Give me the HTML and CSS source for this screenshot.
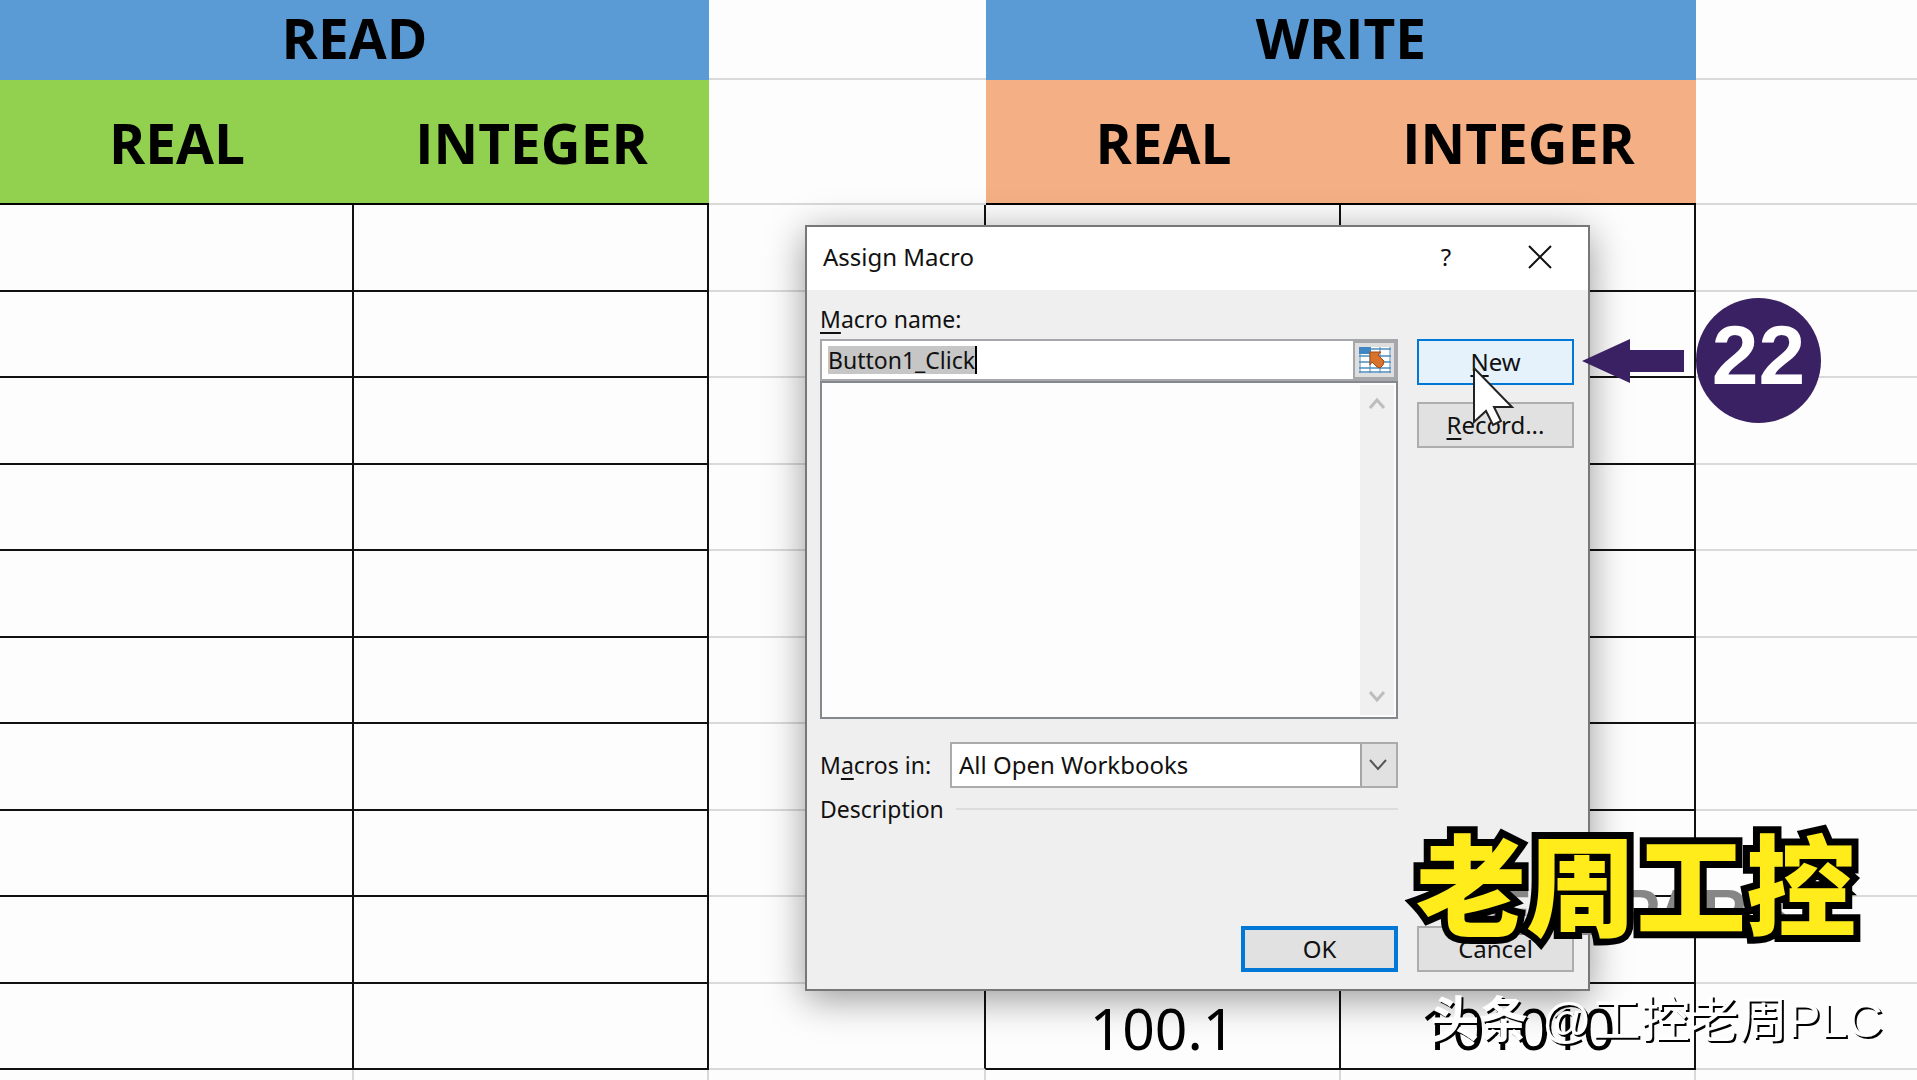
FILE: index.html
```html
<!DOCTYPE html>
<html lang="zh-CN">
<head>
    <meta charset="UTF-8">
    <title>Assign Macro</title>
    <meta name="viewport" content="width=device-width, initial-scale=1">
    <link rel="stylesheet" href="styles.css">
</head>
<body>
<table class="sheet">
    <colgroup>
        <col class="col-first">
        <col class="col-data">
        <col class="col-gap">
        <col class="col-data">
        <col class="col-data">
        <col>
    </colgroup>
    <thead>
    <tr class="group-row">
        <th colspan="2" class="blue">READ</th>
        <td></td>
        <th colspan="2" class="blue">WRITE</th>
        <td></td>
    </tr>
    <tr class="type-row">
        <th class="green">REAL</th>
        <th class="green">INTEGER</th>
        <td class="before"></td>
        <th class="orange">REAL</th>
        <th class="orange">INTEGER</th>
        <td></td>
    </tr>
    </thead>
    <tbody>
    <tr><td class="cell"></td><td class="cell"></td><td class="before"></td><td class="cell"></td><td class="cell"></td><td></td></tr>
    <tr><td class="cell"></td><td class="cell"></td><td class="before"></td><td class="cell"></td><td class="cell"></td><td></td></tr>
    <tr><td class="cell"></td><td class="cell"></td><td class="before"></td><td class="cell"></td><td class="cell"></td><td></td></tr>
    <tr><td class="cell"></td><td class="cell"></td><td class="before"></td><td class="cell"></td><td class="cell"></td><td></td></tr>
    <tr><td class="cell"></td><td class="cell"></td><td class="before"></td><td class="cell"></td><td class="cell"></td><td></td></tr>
    <tr><td class="cell"></td><td class="cell"></td><td class="before"></td><td class="cell"></td><td class="cell"></td><td></td></tr>
    <tr><td class="cell"></td><td class="cell"></td><td class="before"></td><td class="cell"></td><td class="cell"></td><td></td></tr>
    <tr><td class="cell"></td><td class="cell"></td><td class="before"></td><td class="cell"></td><td class="cell"></td><td></td></tr>
    <tr><td class="cell"></td><td class="cell"></td><td class="before"></td><td class="cell"></td><td class="cell"></td><td></td></tr>
    <tr><td class="cell"></td><td class="cell"></td><td class="before"></td><td class="cell">100.1</td><td class="cell">101010</td><td></td></tr>
    </tbody>
    <tfoot>
    <tr><td></td><td></td><td></td><td></td><td></td><td></td></tr>
    </tfoot>
</table>

<form class="dialog">
    <header class="title-bar">
        <h1>Assign Macro</h1>
        <button type="button" class="title-btn" aria-label="Help">?</button>
        <button type="button" class="title-btn" aria-label="Close">
            <svg width="24" height="24" viewBox="0 0 24 24"><path d="M1 1L23 23M23 1L1 23" stroke="#111" stroke-width="2"/></svg>
        </button>
    </header>
    <div class="content">
        <div class="left">
            <label for="macroName" class="name-label"><u>M</u>acro name:</label>
            <div class="name-box">
                <input type="text" id="macroName" value="Button1_Click">
                <button type="button" class="picker" aria-label="Select range">
                    <svg width="32" height="26" viewBox="0 0 32 26">
                        <path fill="#fff" d="M0 0h32v26H0z"/>
                        <path fill="#3f86c4" d="M0 0h12v7H0z"/>
                        <path d="M12 2h20M0 9h32M0 15h32M0 21h32M0 25h32" stroke="#78a9cf" stroke-width="2"/>
                        <path d="M1 0v26M11 0v26M21 0v26M31 0v26" stroke="#4d86b5" stroke-width="1"/>
                        <path fill="#d9722a" stroke="#a44a12" d="M11 5l11 0-3 3 6 6-1 4-3 3-3-1-5-5-2 3z"/>
                    </svg>
                </button>
            </div>
            <div class="list">
                <div class="scrollbar">
                    <svg width="16" height="14" viewBox="0 0 16 14"><path d="M1 12L8 4l7 8" fill="none" stroke="#bdbdbd" stroke-width="3"/></svg>
                    <svg width="16" height="14" viewBox="0 0 16 14"><path d="M1 2l7 8 7-8" fill="none" stroke="#bdbdbd" stroke-width="3"/></svg>
                </div>
            </div>
            <div class="macros-in">
                <label for="macrosIn">M<u>a</u>cros in:</label>
                <div class="select-box">
                    <select id="macrosIn">
                        <option>All Open Workbooks</option>
                    </select>
                    <svg class="chevron" width="18" height="12" viewBox="0 0 18 12"><path d="M1 1l8 9 8-9" fill="none" stroke="#555" stroke-width="2"/></svg>
                </div>
            </div>
            <div class="description">Description</div>
            <button type="submit" class="btn ok">OK</button>
        </div>
        <div class="right">
            <button type="button" class="btn new"><u>N</u>ew</button>
            <button type="button" class="btn"><u>R</u>ecord...</button>
            <button type="button" class="btn cancel">Cancel</button>
        </div>
    </div>
</form>

<!-- 步骤标注 -->
<div class="step">
    <svg width="104" height="44" viewBox="0 0 104 44"><path fill="#3a2163" d="M0 22L48 0v11h54v22H48v11z"/></svg>
    <span class="step-num">22</span>
</div>
<svg class="cursor" width="44" height="62" viewBox="0 0 44 62"><path d="M2 2v54l12-11 7 14 8-4-7-14h18z" fill="#fff" stroke="#222" stroke-width="2"/></svg>

<!-- 水印 -->
<div class="faded">REALPARS</div>
<div class="brand">老周工控</div>
<div class="author"><b>头条</b> @工控老周PLC</div>
</body>
</html>
```

FILE: styles.css
```css
*{
    box-sizing: border-box;
}
body{
    margin: 0;
    height: 100vh;
    overflow: hidden;
    position: relative;
    background: #fdfdfd;
    color: #111;
    font-family: "Noto Sans", "Noto Sans CJK SC", sans-serif;
    font-size: 24px;
}
button, input, select{
    font: inherit;
    color: inherit;
}

/* 表格 */
.sheet{
    width: 100%;
    table-layout: fixed;
    border-collapse: separate;
    border-spacing: 0;
}
.col-first{
    width: 354px;
}
.col-data{
    width: 355px;
}
.col-gap{
    width: 277px;
}
.sheet td, .sheet th{
    padding: 0;
    text-align: center;
    border-bottom: 2px solid #d9d9d9;
}
.sheet th{
    font-family: "Open Sans", sans-serif;
    font-size: 55px;
    line-height: 72px;
    font-weight: 700;
    color: #000;
}
.group-row{
    height: 80px;
}
.type-row{
    height: 125px;
}
.sheet tbody tr{
    height: 87px;
}
.sheet tbody tr:nth-child(even){
    height: 86px;
}
.sheet .blue{
    background: #5b9bd5;
    border-bottom: 0;
    padding-bottom: 5px;
}
.sheet .green, .sheet .orange{
    border-bottom-color: #000;
    padding-top: 3px;
}
.green{
    background: #92d050;
}
.orange{
    background: #f4b084;
}
.sheet .cell{
    border-right: 2px solid #111;
    border-bottom-color: #111;
    padding-top: 4px;
    font-size: 57px;
    line-height: 72px;
    color: #000;
}
.sheet tbody .before{
    border-right: 2px solid #111;
}
.sheet tfoot td{
    height: 10px;
    border-bottom: 0;
    border-right: 2px solid #d9d9d9;
}
.sheet tfoot td:last-child{
    border-right: 0;
}

/* 弹窗 */
.dialog{
    position: absolute;
    left: 805px;
    top: 225px;
    width: 785px;
    background: #efefef;
    border: 2px solid #777;
    box-shadow: 0 8px 36px rgba(0,0,0,.4);
}
.title-bar{
    display: flex;
    align-items: center;
    height: 63px;
    padding: 0 6px 4px 16px;
    background: #fff;
}
.title-bar h1{
    flex: 1;
    margin: 0;
    font-size: 24px;
    font-weight: 400;
}
.title-btn{
    display: flex;
    align-items: center;
    justify-content: center;
    width: 84px;
    height: 58px;
    margin-left: 10px;
    padding: 0;
    border: 0;
    background: none;
}
.content{
    display: flex;
    justify-content: space-between;
    padding: 11px 14px 17px 13px;
}
u{
    text-underline-offset: 4px;
    text-decoration-thickness: 2px;
}
.left{
    display: flex;
    flex-direction: column;
    width: 578px;
}
.left label, .name-box input, .description{
    font-size: 23px;
}
.name-label{
    line-height: 36px;
    padding-bottom: 2px;
}
.name-box{
    display: flex;
    align-items: center;
    justify-content: space-between;
    height: 42px;
    padding-left: 6px;
    background: #fff;
    border: 2px solid #a5a7ab;
}
.name-box input{
    field-sizing: content;
    height: 28px;
    padding: 0;
    border: 0;
    border-right: 2px solid #000;
    background: #c6c6c6;
    outline: none;
}
.picker{
    display: flex;
    align-items: center;
    justify-content: center;
    width: 43px;
    height: 38px;
    padding: 0;
    border: 2px solid #a5a7ab;
    background: #dedede;
}
.list{
    display: flex;
    justify-content: flex-end;
    height: 338px;
    padding: 2px;
    background: #fdfdfd;
    border: 2px solid #85888f;
}
.scrollbar{
    display: flex;
    flex-direction: column;
    justify-content: space-between;
    align-items: center;
    width: 34px;
    padding: 11px 0;
    background: #f0f0f0;
}
.macros-in{
    display: flex;
    align-items: center;
    justify-content: space-between;
    margin-top: 23px;
}
.select-box{
    position: relative;
    width: 448px;
}
.select-box select{
    display: block;
    width: 100%;
    height: 46px;
    padding: 0 7px 2px;
    appearance: none;
    border: 2px solid #ababab;
    border-radius: 0;
    background: linear-gradient(#a5a5a5, #a5a5a5) right 34px top / 2px 100% no-repeat, linear-gradient(#e1e1e1, #e1e1e1) right / 34px 100% no-repeat #fff;
}
.chevron{
    position: absolute;
    right: 11px;
    top: 17px;
    pointer-events: none;
}
.description{
    display: flex;
    align-items: center;
    gap: 12px;
    margin-top: 5px;
    line-height: 32px;
}
.description::after{
    content: "";
    flex: 1;
    height: 2px;
    background: #dcdcdc;
}
.right{
    display: flex;
    flex-direction: column;
    gap: 17px;
    width: 157px;
    padding-top: 38px;
}
.btn{
    width: 157px;
    height: 46px;
    padding: 0;
    line-height: 32px;
    border: 2px solid #adadad;
    background: #e1e1e1;
}
.new{
    border-color: #0078d7;
    background: #e5f1fb;
}
.ok{
    margin-top: 101px;
    align-self: flex-end;
    border: 4px solid #0078d7;
}
.cancel{
    margin-top: auto;
}

/* 标注 */
.step{
    position: absolute;
    left: 1582px;
    top: 298px;
    display: flex;
    align-items: center;
    gap: 10px;
}
.step-num{
    width: 125px;
    height: 125px;
    line-height: 114px;
    border-radius: 50%;
    background: #3a2163;
    color: #fff;
    text-align: center;
    font-family: "Liberation Sans", sans-serif;
    font-size: 84px;
    font-weight: 700;
}
.cursor{
    position: absolute;
    left: 1472px;
    top: 366px;
}
.faded{
    position: absolute;
    left: 1443px;
    top: 876px;
    color: #868686;
    font-family: "Liberation Sans", sans-serif;
    font-size: 64px;
    font-weight: 700;
}
.brand{
    position: absolute;
    left: 1416px;
    top: 800px;
    line-height: 160px;
    color: #ffec1a;
    font-family: "Noto Sans CJK SC", sans-serif;
    font-size: 110px;
    font-weight: 900;
    -webkit-text-stroke: 14px #000;
    paint-order: stroke fill;
    white-space: nowrap;
}
.author{
    position: absolute;
    right: 34px;
    top: 986px;
    line-height: 68px;
    color: #fff;
    font-family: "Liberation Sans", "Noto Sans CJK SC", sans-serif;
    font-size: 49px;
    text-shadow: 2px 2px 0 #000;
    white-space: nowrap;
}
```
